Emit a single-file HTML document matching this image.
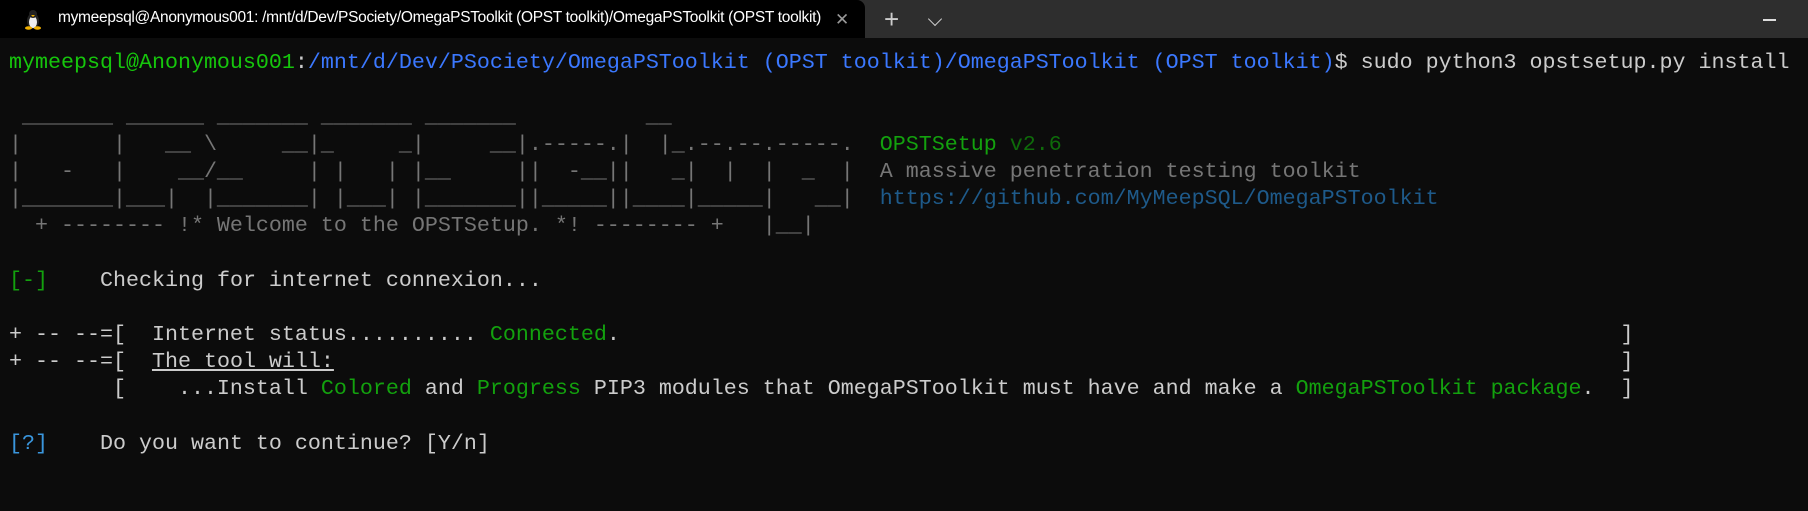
<!DOCTYPE html>
<html><head><meta charset="utf-8"><style>
html,body{margin:0;padding:0;background:#0c0c0c;width:1808px;height:511px;overflow:hidden}
.bar{position:absolute;left:0;top:0;width:1808px;height:38px;background:#2e2e2e}
.tab{position:absolute;left:0;top:0;width:865px;height:38px;background:#000;border-radius:0 8px 0 0}
.title{position:absolute;left:58px;top:9px;font:15.5px "Liberation Sans",sans-serif;color:#fff;white-space:nowrap;letter-spacing:-0.3px}
.x{position:absolute;left:835px;top:10px;color:#999;font:17px "Liberation Sans",sans-serif;font-weight:100}
.plus{position:absolute;left:884px;top:4px;color:#ccc;font:26px "Liberation Sans",sans-serif;font-weight:100}
.chev{position:absolute;left:930px;top:14px;width:9px;height:9px;border-right:1.5px solid #ccc;border-bottom:1.5px solid #ccc;transform:rotate(45deg)}
.min{position:absolute;left:1763px;top:19px;width:13px;height:1.5px;background:#ddd}
pre{position:absolute;left:9px;top:49px;margin:0;font-family:"Liberation Mono",monospace;font-size:21.67px;line-height:27.2px;color:#cccccc}
.g{color:#16c60c}.b{color:#3b78ff}.d{color:#767676}.gr{color:#13a10e}.dg{color:#0e6b0a}.u{color:#1e5a8a}.c{color:#3a96dd}
</style></head><body>
<div class="bar"></div>
<div class="tab"></div>
<svg style="position:absolute;left:24px;top:9px" width="18" height="21" viewBox="0 0 18 21"><ellipse cx="9" cy="12" rx="6" ry="8" fill="#222"/><ellipse cx="9" cy="13" rx="4" ry="6" fill="#eee"/><circle cx="9" cy="5" r="4" fill="#222"/><path d="M7 6 L9 8 L11 6Z" fill="#f0b000"/><ellipse cx="4.5" cy="19" rx="3.5" ry="1.8" fill="#f0b000"/><ellipse cx="13.5" cy="19" rx="3.5" ry="1.8" fill="#f0b000"/></svg>
<div class="title">mymeepsql@Anonymous001: /mnt/d/Dev/PSociety/OmegaPSToolkit (OPST toolkit)/OmegaPSToolkit (OPST toolkit)</div>
<div class="x">✕</div>
<div class="plus">+</div>
<div class="chev"></div>
<div class="min"></div>
<pre><span class="g">mymeepsql@Anonymous001</span>:<span class="b">/mnt/d/Dev/PSociety/OmegaPSToolkit (OPST toolkit)/OmegaPSToolkit (OPST toolkit)</span>$ sudo python3 opstsetup.py install

<span class="d"> _______ ______ _______ _______ _______          __</span>
<span class="d">|       |   __ \     __|_     _|     __|.-----.|  |_.--.--.-----.</span>  <span class="gr">OPSTSetup</span> <span class="dg">v2.6</span>
<span class="d">|   -   |    __/__     | |   | |__     ||  -__||   _|  |  |  _  |</span>  <span class="d">A massive penetration testing toolkit</span>
<span class="d">|_______|___|  |_______| |___| |_______||_____||____|_____|   __|</span>  <span class="u">https://github.com/MyMeepSQL/OmegaPSToolkit</span>
<span class="d">  + -------- !* Welcome to the OPSTSetup. *! -------- +   |__|</span>

<span class="gr">[-]</span>    Checking for internet connexion...

+ -- --=[  Internet status.......... <span class="gr">Connected</span>.                                                                             ]
+ -- --=[  <u>The tool will:</u>                                                                                                   ]
        [    ...Install <span class="gr">Colored</span> and <span class="gr">Progress</span> PIP3 modules that OmegaPSToolkit must have and make a <span class="gr">OmegaPSToolkit package</span>.  ]

<span class="c">[?]</span>    Do you want to continue? [Y/n]</pre>
</body></html>
